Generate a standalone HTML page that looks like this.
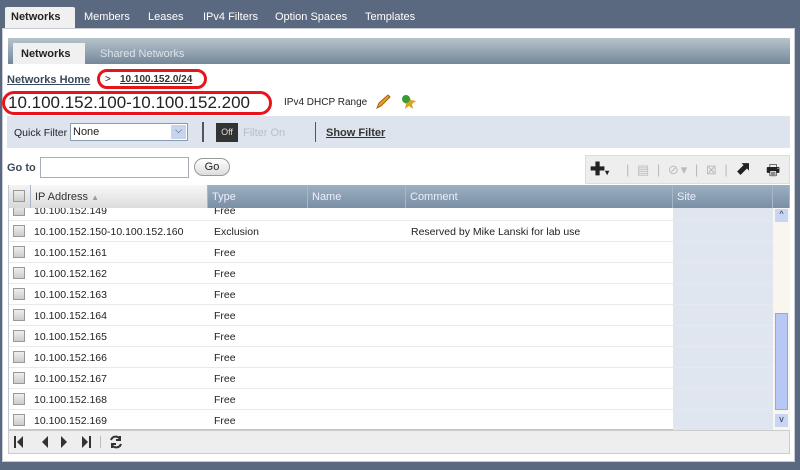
<!DOCTYPE html>
<html><head><meta charset="utf-8"><style>
*{margin:0;padding:0;box-sizing:border-box}
body{width:800px;height:470px;background:#5a6880;font-family:"Liberation Sans",sans-serif;font-size:11px;color:#222;position:relative;overflow:hidden}
.abs{position:absolute}
.tab{position:absolute;top:11px;color:#fff;font-size:11px}
.panel{left:2px;top:28px;width:793px;height:434px;background:#fff;border:1px solid #c8ccd4}
.sub{left:8px;top:38px;width:782px;height:26px;background:linear-gradient(#b7c4cc,#74879a)}
.grid{left:8px;top:185px;width:782px;height:245px;border:1px solid #c0c6cf}
.hdr{top:185px;height:23px;background:linear-gradient(#9cb0c2,#7a8fa4);color:#eef;border-right:1px solid #a9b8c8;padding:6px 4px;font-size:11px}
.row{left:9px;width:764px;height:21px;border-bottom:1px solid #e6e9ee;font-size:10.5px}
.row span{position:absolute;top:5px}
.cb{position:absolute;left:4px;top:4px;width:12px;height:12px;border:1px solid #999;background:linear-gradient(#eee,#ccc)}
.site{position:absolute;left:664px;width:100px;top:0;height:20px;background:#dfe6ef}
</style></head><body>
<div class="abs" style="left:5px;top:7px;width:70px;height:22px;background:#f0f0f0;border-radius:2px 2px 0 0"></div>
<div class="tab" style="left:11px;color:#222;font-weight:bold">Networks</div>
<div class="tab" style="left:84px">Members</div>
<div class="tab" style="left:148px">Leases</div>
<div class="tab" style="left:203px">IPv4 Filters</div>
<div class="tab" style="left:275px">Option Spaces</div>
<div class="tab" style="left:365px">Templates</div>
<div class="abs panel"></div>
<div class="abs sub"></div>
<div class="abs" style="left:13px;top:43px;width:72px;height:21px;background:#f0f0f0"></div>
<div class="abs" style="left:21px;top:48px;font-weight:bold">Networks</div>
<div class="abs" style="left:100px;top:48px;color:#dde3ea">Shared Networks</div>
<div class="abs" style="left:7px;top:74px;font-weight:bold;color:#3a4a5c;text-decoration:underline">Networks Home</div>
<div class="abs" style="left:97px;top:69px;width:110px;height:20px;border:3px solid #e8141c;border-radius:11px"></div>
<div class="abs" style="left:105px;top:74px;font-size:10px">&gt;</div>
<div class="abs" style="left:120px;top:74px;font-size:10px;font-weight:bold;text-decoration:underline;color:#333">10.100.152.0/24</div>
<div class="abs" style="left:2px;top:91px;width:270px;height:24px;border:3px solid #e8141c;border-radius:12px"></div>
<div class="abs" style="left:8px;top:93px;font-size:17px;color:#222">10.100.152.100-10.100.152.200</div>
<div class="abs" style="left:284px;top:97px;font-size:10px">IPv4 DHCP Range</div>
<svg class="abs" style="left:374px;top:93px" width="18" height="18"><path d="M3 15 L5 10 L14 2 L16 4 L7 13 Z" fill="#e8a020" stroke="#a06010"/></svg>
<svg class="abs" style="left:400px;top:93px" width="18" height="18"><path d="M9 3 L11 7 L16 8 L12 11 L13 16 L9 13 L5 16 L6 11 L2 8 L7 7Z" fill="#d9a520"/><circle cx="6" cy="6" r="4" fill="#3a9a3a"/></svg>
<div class="abs" style="left:7px;top:116px;width:783px;height:32px;background:#dde4ee"></div>
<div class="abs" style="left:14px;top:127px;font-size:10.5px">Quick Filter</div>
<div class="abs" style="left:70px;top:123px;width:118px;height:18px;background:#fff;border:1px solid #8a9ab0;padding:2px 2px">None</div>
<div class="abs" style="left:171px;top:125px;width:15px;height:14px;background:#c6d4ee;color:#335;font-size:9px;text-align:center">&#x2335;</div>
<div class="abs" style="left:202px;top:122px;width:2px;height:20px;background:#555"></div>
<div class="abs" style="left:216px;top:123px;width:22px;height:19px;background:#333;color:#ddd;font-size:9px;text-align:center;padding-top:4px">Off</div>
<div class="abs" style="left:243px;top:127px;color:#b8bec8">Filter On</div>
<div class="abs" style="left:315px;top:122px;width:1px;height:20px;background:#555"></div>
<div class="abs" style="left:326px;top:127px;font-weight:bold;text-decoration:underline;color:#333">Show Filter</div>
<div class="abs" style="left:7px;top:162px;font-weight:bold;color:#3a4a5c">Go to</div>
<div class="abs" style="left:40px;top:157px;width:149px;height:21px;border:1px solid #aab;background:#fff"></div>
<div class="abs" style="left:194px;top:158px;width:36px;height:18px;border:1px solid #999;border-radius:9px;background:linear-gradient(#fff,#ddd);text-align:center;padding-top:2px">Go</div>
<div class="abs" style="left:585px;top:155px;width:205px;height:29px;background:#eee;border:1px solid #ddd"></div>
<div class="abs" style="left:590px;top:159px;font-size:18px;font-weight:bold;color:#222">&#10010;<span style="font-size:8px">▾</span></div>
<div class="abs" style="left:626px;top:162px;color:#bbb;font-size:13px;letter-spacing:2px">| ▤ | ⊘▾ | ⊠ |</div>
<div class="abs" style="left:736px;top:158px;font-size:18px;color:#222;font-weight:bold">⬈</div>
<div class="abs" style="left:766px;top:160px;font-size:15px;color:#222">🖶</div>
<div class="abs grid"></div>
<div class="abs hdr" style="left:9px;width:22px;background:linear-gradient(#f4f4f4,#d8d8d8)"><div class="cb" style="left:4px;top:5px"></div></div>
<div class="abs hdr" style="left:31px;width:177px;background:linear-gradient(#f8f8f8,#dcdcdc);color:#333">IP Address <span style="color:#999;font-size:8px">▲</span></div>
<div class="abs hdr" style="left:208px;width:100px">Type</div>
<div class="abs hdr" style="left:308px;width:98px">Name</div>
<div class="abs hdr" style="left:406px;width:267px">Comment</div>
<div class="abs hdr" style="left:673px;width:100px">Site</div>
<div class="abs hdr" style="left:773px;width:17px"></div>
<div class="abs" style="left:9px;top:208px;width:764px;height:222px;overflow:hidden">
<div class="abs row" style="left:0;top:-8px"><div class="cb"></div><span style="left:25px">10.100.152.149</span><span style="left:205px">Free</span><div class="site"></div></div>
<div class="abs row" style="left:0;top:13px"><div class="cb"></div><span style="left:25px">10.100.152.150-10.100.152.160</span><span style="left:205px">Exclusion</span><span style="left:402px">Reserved by Mike Lanski for lab use</span><div class="site"></div></div>
<div class="abs row" style="left:0;top:34px"><div class="cb"></div><span style="left:25px">10.100.152.161</span><span style="left:205px">Free</span><div class="site"></div></div>
<div class="abs row" style="left:0;top:55px"><div class="cb"></div><span style="left:25px">10.100.152.162</span><span style="left:205px">Free</span><div class="site"></div></div>
<div class="abs row" style="left:0;top:76px"><div class="cb"></div><span style="left:25px">10.100.152.163</span><span style="left:205px">Free</span><div class="site"></div></div>
<div class="abs row" style="left:0;top:97px"><div class="cb"></div><span style="left:25px">10.100.152.164</span><span style="left:205px">Free</span><div class="site"></div></div>
<div class="abs row" style="left:0;top:118px"><div class="cb"></div><span style="left:25px">10.100.152.165</span><span style="left:205px">Free</span><div class="site"></div></div>
<div class="abs row" style="left:0;top:139px"><div class="cb"></div><span style="left:25px">10.100.152.166</span><span style="left:205px">Free</span><div class="site"></div></div>
<div class="abs row" style="left:0;top:160px"><div class="cb"></div><span style="left:25px">10.100.152.167</span><span style="left:205px">Free</span><div class="site"></div></div>
<div class="abs row" style="left:0;top:181px"><div class="cb"></div><span style="left:25px">10.100.152.168</span><span style="left:205px">Free</span><div class="site"></div></div>
<div class="abs row" style="left:0;top:202px"><div class="cb"></div><span style="left:25px">10.100.152.169</span><span style="left:205px">Free</span><div class="site"></div></div>
</div>
<div class="abs" style="left:773px;top:208px;width:17px;height:222px;background:#f8f6ee"></div>
<div class="abs" style="left:775px;top:209px;width:13px;height:13px;background:#c8d6f4;color:#335;font-size:9px;text-align:center">^</div>
<div class="abs" style="left:775px;top:313px;width:13px;height:97px;background:#b8c8f4;border:1px solid #9ab"></div>
<div class="abs" style="left:775px;top:414px;width:13px;height:13px;background:#c8d6f4;color:#335;font-size:9px;text-align:center">v</div>
<div class="abs" style="left:8px;top:430px;width:782px;height:24px;background:#eee;border:1px solid #ccc"></div>
<svg class="abs" style="left:12px;top:434px" width="120" height="16">
<g fill="#333"><rect x="2" y="2" width="2" height="12"/><path d="M11 2 L5 8 L11 14Z"/><path d="M36 2 L30 8 L36 14Z"/><path d="M49 2 L55 8 L49 14Z"/><path d="M70 2 L76 8 L70 14Z"/><rect x="77" y="2" width="2" height="12"/></g>
<rect x="88" y="2" width="1" height="12" fill="#bbb"/>
<path d="M99 6 A5 5 0 0 1 108 5 M108 2 L108 6 L104 6 M109 10 A5 5 0 0 1 100 11 M100 14 L100 10 L104 10" stroke="#333" stroke-width="2" fill="none"/>
</svg>
</body></html>
